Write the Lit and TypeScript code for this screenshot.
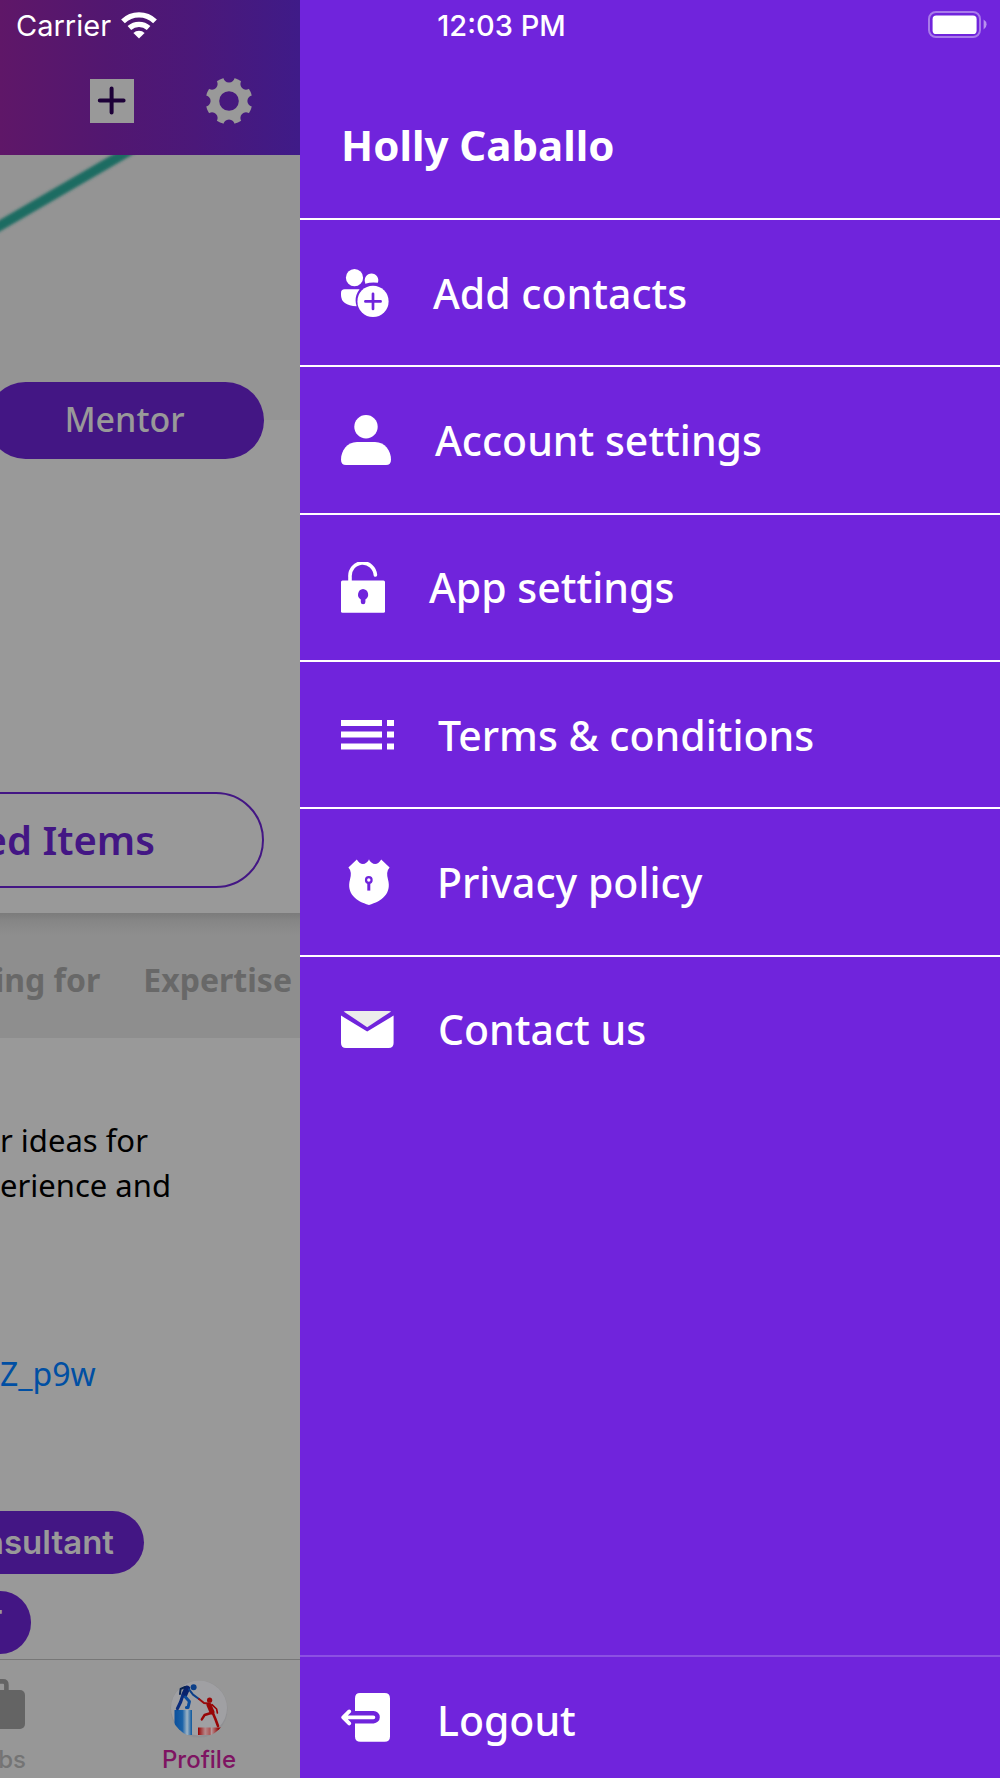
import { LitElement, html, svg, css } from "lit";
import { customElement } from "lit/decorators.js";

const notchAngles = [0, 45, 90, 135, 180, 225, 270, 315];

const gearIcon = html`<svg width="46" height="46" viewBox="0 0 46 46" aria-hidden="true">
  <mask id="teeth">
    <rect width="46" height="46" fill="#fff" />
    <circle cx="23" cy="23" r="9.8" fill="#000" />
    ${notchAngles.map(
      (a) => svg`<circle cx="23" cy="-1" r="5.6" fill="#000" transform="rotate(${a} 23 23)" />
        <path d="M18.6 -3 L18 0.6 L28 0.6 L27.4 -3Z" fill="#000" transform="rotate(${a} 23 23)" />`
    )}
  </mask>
  <circle cx="23" cy="23" r="23.4" fill="#999" mask="url(#teeth)" />
</svg>`;

const addIcon = html`<svg width="48" height="48" viewBox="0 0 48 48" aria-hidden="true">
  <g fill="#fff">
    <circle cx="13.5" cy="8.7" r="8.6" />
    <path d="M24.2 13.8A6.8 6.8 0 1 1 36.8 13.8Q30.5 12.8 24.2 14.8Z" />
    <path d="M3.6 20.3H18.6Q14.6 25.5 14.6 31.5Q14.6 34.5 15.6 37.2Q0 36.6 0 26V24Q0 20.3 3.6 20.3Z" />
    <circle cx="32" cy="32.4" r="15.6" />
  </g>
  <path d="M32 24.8V40M24.4 32.4H39.6" stroke="#7024dc" stroke-width="2.7" stroke-linecap="round" />
</svg>`;

const userIcon = html`<svg width="50" height="50" viewBox="0 0 50 50" fill="#fff" aria-hidden="true">
  <circle cx="25" cy="11.7" r="11.7" />
  <path d="M16 27H34C44 27 50 36 50 44.5Q50 50 45 50H5Q0 50 0 44.5C0 36 6 27 16 27Z" />
</svg>`;

const lockIcon = html`<svg width="44" height="51" viewBox="0 0 44 51" aria-hidden="true">
  <path d="M9 19V15A12.6 13 0 0 1 34.4 13" fill="none" stroke="#fff" stroke-width="3.6" stroke-linecap="round" />
  <rect y="18.4" width="44" height="32.4" rx="1.5" fill="#fff" />
  <path d="M22 27A5.6 5.6 0 0 1 24.4 37.4V40A2.1 2.1 0 0 1 19.8 40V37.4A5.6 5.6 0 0 1 22 27Z" fill="#7024dc" />
</svg>`;

const listIcon = html`<svg width="53" height="30" viewBox="0 0 53 30" fill="#fff" aria-hidden="true">
  <path d="M0 0H41V6H0ZM46 0H53V6H46ZM0 11.5H41V17.5H0ZM46 11.5H53V17.5H46ZM0 23.4H41V29.4H0ZM46 23.4H53V29.4H46Z" />
</svg>`;

const shieldIcon = html`<svg width="52" height="46" viewBox="0 0 52 46" aria-hidden="true">
  <path
    d="M15.8 0.4Q20.4 7.6 25.6 3.4Q27.6 2.2 28 0.2Q28.4 2.2 30.4 3.4Q35.6 7.6 40.2 0.4L48.6 8.6Q44.8 12.6 47 20.6C50.8 34.6 41 42.4 28 46C15 42.4 5.2 34.6 9 20.6Q11.2 12.6 7.4 8.6Z"
    fill="#fff"
  />
  <circle cx="27.8" cy="21" r="2.8" fill="none" stroke="#7024dc" stroke-width="2.2" />
  <path d="M27.8 24V31.6" stroke="#7024dc" stroke-width="3" />
</svg>`;

const mailIcon = html`<svg width="53" height="37" viewBox="0 0 53 37" aria-hidden="true">
  <path d="M2.6 0.4Q3.4 0 5 0H48Q49.6 0 50.2 0.4L26.2 16.2Z" fill="#ececec" />
  <path d="M0 4.6L26.2 20.6L52.6 4.6V32Q52.6 37 47.6 37H5Q0 37 0 32Z" fill="#fff" />
</svg>`;

const logoutIcon = html`<svg width="52" height="49" viewBox="0 0 52 49" aria-hidden="true">
  <path
    d="M19 0H43.6Q49 0 49 5.4V43.4Q49 48.8 43.6 48.8H19.4Q14 48.8 14 43.4V30.4H32.6A6.2 6.2 0 0 0 32.6 18H14V5.4Q14 0 19 0Z"
    fill="#fff"
  />
  <path d="M32.4 24.3H3M8.2 18.4L2.2 24.3L8.2 30.4" fill="none" stroke="#fff" stroke-width="3.8" stroke-linecap="round" stroke-linejoin="round" />
</svg>`;

const avatar = html`<svg width="58" height="58" viewBox="0 0 58 58" aria-hidden="true">
  <defs>
    <linearGradient id="blueStep"><stop offset="0" stop-color="#0a4f9c" /><stop offset=".45" stop-color="#1a62a8" /><stop offset=".72" stop-color="#9fb4c4" /><stop offset="1" stop-color="#0a559c" /></linearGradient>
    <linearGradient id="redStep"><stop offset="0" stop-color="#900" /><stop offset=".3" stop-color="#b58a8c" /><stop offset=".5" stop-color="#a55" /><stop offset=".56" stop-color="#b49a9c" /><stop offset=".85" stop-color="#980606" /></linearGradient>
    <clipPath id="round"><circle cx="29" cy="29" r="28.6" /></clipPath>
  </defs>
  <circle cx="29" cy="29" r="28.6" fill="#909093" />
  <ellipse cx="29" cy="28" rx="28" ry="27.4" fill="#a0a0a3" />
  <g clip-path="url(#round)">
    <path d="M4.5 30H22V55H14L4.5 45Z" fill="url(#blueStep)" />
    <path d="M28 47.4H52L44 55H28Z" fill="url(#redStep)" />
  </g>
  <g fill="none" stroke-linecap="round" stroke-linejoin="round">
    <path d="M17 8.6L14.4 14.6" stroke="#08226c" stroke-width="6" />
    <path d="M15 7L10.6 9L10 14" stroke="#0a2450" stroke-width="2" />
    <path d="M19 9.4L23 14.6L29 19" stroke="#0c3f88" stroke-width="2" />
    <path d="M12.6 16L10.6 22L7.4 28.6" stroke="#0a2c7c" stroke-width="3.2" />
    <path d="M15.4 17L19.4 21.6L18 27.6H16.4" stroke="#0a4b9c" stroke-width="3" />
    <path d="M29 19L34 23L38 23.4" stroke="#980c0c" stroke-width="2" />
    <path d="M39 25L42 32" stroke="#980606" stroke-width="5" />
    <path d="M42 24.6L46.6 29L47.4 33" stroke="#900" stroke-width="1.6" />
    <path d="M41 33L34.6 35L31.8 39.4" stroke="#980606" stroke-width="2.4" />
    <path d="M43 33.4L45.4 39L48 46" stroke="#980606" stroke-width="2.6" />
  </g>
  <circle cx="23.6" cy="7.2" r="3" fill="#0c3f88" />
  <circle cx="39.6" cy="20.2" r="2.6" fill="#980606" />
</svg>`;

const menu = [
  { label: "Add contacts", icon: addIcon },
  { label: "Account settings", icon: userIcon },
  { label: "App settings", icon: lockIcon },
  { label: "Terms & conditions", icon: listIcon },
  { label: "Privacy policy", icon: shieldIcon },
  { label: "Contact us", icon: mailIcon },
];

@customElement("status-bar")
export class StatusBar extends LitElement {
  static styles = css`
    :host {
      display: grid;
      grid-template-columns: 1fr auto 1fr;
      align-items: center;
      height: 50px;
      padding: 0 13px 0 16px;
      box-sizing: border-box;
      color: #fff;
      font: 400 29px/48px Inter, "Liberation Sans", sans-serif;
    }
    .carrier {
      display: flex;
      align-items: center;
      gap: 10px;
    }
    .text {
      padding-top: 2px;
    }
    .time {
      font-weight: 500;
    }
    .battery {
      justify-self: end;
    }
    svg {
      display: block;
    }
  `;

  render() {
    return html`
      <div class="carrier">
        <span class="text">Carrier</span>
        <svg width="36" height="28" viewBox="0 0 36 28" aria-hidden="true">
          <g fill="none" stroke="#fff" stroke-width="5.4">
            <path d="M2 10.4A23 23 0 0 1 34 10.4" />
            <path d="M8.4 17A14.4 14.4 0 0 1 27.6 17" />
          </g>
          <path d="M18 27.6L12.4 22A8 8 0 0 1 23.6 22Z" fill="#fff" />
        </svg>
      </div>
      <span class="text time">12:03 PM</span>
      <svg class="battery" width="59" height="28" viewBox="0 0 59 28" aria-hidden="true">
        <rect x="1" y="1" width="51" height="25" rx="7" fill="none" stroke="#fff" stroke-opacity=".4" stroke-width="2" />
        <rect x="4.6" y="4.6" width="44" height="18.4" rx="3.6" fill="#fff" />
        <path d="M55.6 8.6Q58.6 10.4 58.6 13.6Q58.6 16.8 55.6 18.6Z" fill="#fff" fill-opacity=".5" />
      </svg>
    `;
  }
}

@customElement("profile-page")
export class ProfilePage extends LitElement {
  static styles = css`
    :host {
      display: flex;
      flex-direction: column;
      overflow: hidden;
      background: #999;
      color: #000;
      font-family: "Noto Sans", "Open Sans", sans-serif;
      white-space: nowrap;
    }
    button {
      padding: 0;
      border: 0;
      background: none;
      font: inherit;
      color: inherit;
      flex: none;
    }
    svg {
      display: block;
    }
    .topbar {
      display: flex;
      justify-content: flex-end;
      align-items: center;
      gap: 72px;
      height: 155px;
      padding: 46px 48px 0 0;
      box-sizing: border-box;
      background: linear-gradient(90deg, #5f1768, #521770 35%, #4b1879 65%, #3f1b88);
    }
    .cover {
      height: 265px;
      background: #949494;
    }
    .summary {
      display: flex;
      flex-direction: column;
      align-items: flex-end;
      gap: 333px;
      margin-top: -38px;
      padding: 0 36px 25px 0;
    }
    .role {
      width: 277px;
      height: 77px;
      padding: 0 2px 4px 0;
      border-radius: 39px;
      background: #431684;
      color: #999;
      font-size: 34px;
      font-weight: 500;
    }
    .saved {
      width: 600px;
      height: 96px;
      padding: 0 107px 2px 0;
      box-sizing: border-box;
      border: 2px solid #431684;
      border-radius: 48px;
      color: #431684;
      font-size: 40px;
      font-weight: 600;
      text-align: right;
    }
    .tabs {
      display: flex;
      justify-content: flex-end;
      gap: 43px;
      padding: 8px 8px 0 0;
      background: linear-gradient(#7b7b7b, #868686 8px, #8e8e8e 22px);
      color: #686868;
      font-size: 32px;
      font-weight: 700;
      line-height: 117px;
    }
    .about {
      display: flex;
      flex-direction: column;
      align-items: flex-start;
      padding-top: 80px;
      font-size: 32px;
      line-height: 45px;
    }
    .about p {
      margin: 0;
      font-size: 31px;
    }
    .about a {
      margin-top: 143px;
      color: #004fa3;
      text-decoration: none;
    }
    .chips {
      display: flex;
      flex-direction: column;
      align-items: flex-start;
      gap: 17px;
      margin-top: 115px;
      color: #999;
      font: 600 33px/63px Inter, "Liberation Sans", sans-serif;
    }
    .chip {
      display: flex;
      justify-content: flex-end;
      border-radius: 0 32px 32px 0;
      background: #431684;
    }
    .wide {
      width: 114px;
      padding-right: 30px;
    }
    .narrow {
      width: 3px;
      padding-right: 28px;
    }
    .tabbar {
      display: flex;
      justify-content: space-between;
      align-items: flex-end;
      height: 119px;
      margin-top: auto;
      padding-right: 64px;
      box-sizing: border-box;
      border-top: 1px solid #777;
      background: #979797;
      font: 500 24px/28px Inter, "Liberation Sans", sans-serif;
    }
    .tab {
      display: flex;
      flex-direction: column;
      align-items: center;
      padding-bottom: 4px;
    }
    .jobs {
      align-items: flex-end;
      width: 26px;
      color: #747474;
      gap: 16px;
    }
    .profile {
      color: #7e1462;
      gap: 8px;
    }
  `;

  render() {
    return html`
      <header class="topbar">
        <button aria-label="Add">
          <svg width="44" height="44" viewBox="0 0 44 44" aria-hidden="true">
            <rect width="44" height="44" fill="#999" />
            <path d="M21.6 9.6V33.6M9.8 21.4H33.6" stroke="#1d0038" stroke-width="4" stroke-linecap="round" />
          </svg>
        </button>
        <button aria-label="Settings">${gearIcon}</button>
      </header>
      <div class="cover">
        <svg width="170" height="90" viewBox="0 0 170 90" aria-hidden="true">
          <defs>
            <filter id="soft"><feGaussianBlur stdDeviation="1.6" /></filter>
          </defs>
          <path d="M-12 77.5L146 -14" stroke="#1f6c62" stroke-width="10" filter="url(#soft)" />
        </svg>
      </div>
      <section class="summary">
        <button class="role">Mentor</button>
        <button class="saved">ed Items</button>
      </section>
      <nav class="tabs">
        <button>ing for</button>
        <button>Expertise</button>
      </nav>
      <section class="about">
        <p>r ideas for<br />erience and</p>
        <a href="#link">Z_p9w</a>
      </section>
      <div class="chips">
        <span class="chip wide">nsultant</span>
        <span class="chip narrow">T</span>
      </div>
      <nav class="tabbar">
        <button class="tab jobs">
          <svg width="26" height="51" viewBox="0 0 26 51" aria-hidden="true">
            <path d="M-8 12V5Q-8 2.4 -5 2.4H3Q6.4 2.4 6.4 6V12" fill="none" stroke="#646464" stroke-width="4.6" />
            <rect x="-30" y="11" width="55" height="39" rx="5" fill="#646464" />
          </svg>
          <span>bs</span>
        </button>
        <button class="tab profile">${avatar}<span>Profile</span></button>
      </nav>
    `;
  }
}

@customElement("side-drawer")
export class SideDrawer extends LitElement {
  static styles = css`
    :host {
      display: flex;
      flex-direction: column;
      background: #7024dc;
      color: #fff;
      font: 500 41px/56px "Noto Sans", "Open Sans", sans-serif;
    }
    .name {
      margin: 0;
      padding: 117px 41px 45px;
      font-size: 42px;
      font-weight: 700;
      line-height: 56px;
    }
    .menu {
      display: grid;
      grid-auto-rows: 1fr;
      min-height: 884px;
      margin: 0;
      padding: 0;
      list-style: none;
    }
    .item {
      display: flex;
      border-top: 2px solid #fff;
    }
    .row {
      display: flex;
      flex: 1;
      align-items: center;
      gap: 44px;
      padding: 0 41px;
      border: 0;
      background: none;
      color: inherit;
      font: inherit;
      text-align: left;
      white-space: nowrap;
    }
    .footer {
      display: flex;
      height: 123px;
      margin-top: auto;
      box-sizing: border-box;
      border-top: 2px solid #8c50e3;
    }
    .footer span {
      padding-top: 4px;
    }
    svg {
      flex: none;
    }
  `;

  render() {
    return html`
      <h1 class="name">Holly Caballo</h1>
      <ul class="menu">
        ${menu.map(
          (m) => html`<li class="item"><button class="row">${m.icon}<span>${m.label}</span></button></li>`
        )}
      </ul>
      <footer class="footer"><button class="row">${logoutIcon}<span>Logout</span></button></footer>
    `;
  }
}

@customElement("app-root")
export class AppRoot extends LitElement {
  static styles = css`
    :host {
      display: grid;
      grid-template-columns: 3fr 7fr;
      min-height: 100vh;
      position: relative;
    }
    .page {
      min-width: 0;
    }
    .status {
      position: absolute;
      inset: 0 0 auto;
    }
  `;

  render() {
    return html`
      <profile-page class="page"></profile-page>
      <side-drawer></side-drawer>
      <status-bar class="status"></status-bar>
    `;
  }
}
